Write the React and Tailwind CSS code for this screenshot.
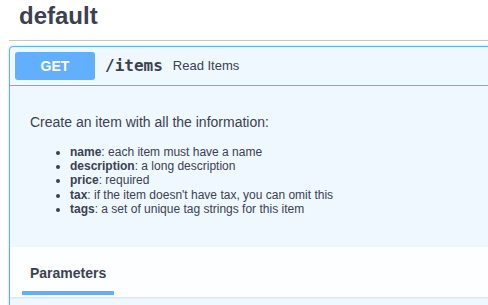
import React from 'react';

const fields = [
  { name: 'name', text: 'each item must have a name' },
  { name: 'description', text: 'a long description' },
  { name: 'price', text: 'required' },
  { name: 'tax', text: "if the item doesn't have tax, you can omit this" },
  { name: 'tags', text: 'a set of unique tag strings for this item' },
];

export default function App() {
  return (
    <div className="w-[488px] h-[305px] overflow-hidden bg-white text-[#3b4151] font-['Liberation_Sans',Arial,sans-serif]">
      <div className="w-[540px] pl-[9px]">
        {/* tag heading */}
        <div className="h-[41px] border-b border-[#c4c6cb] pl-[10px] pt-[2px]">
          <h3 className="text-[24px] leading-[28px] font-bold">default</h3>
        </div>

        {/* operation block */}
        <div className="mt-[5px] rounded-[4px] border border-[#61affe] bg-[#eff7ff] shadow-[0_0_3px_rgba(0,0,0,0.19)]">
          <div className="flex items-center p-[5px] border-b border-[#61affe]">
            <span className="w-[80px] h-[28px] flex items-center justify-center rounded-[3px] bg-[#61affe] text-white text-[14px] font-bold">
              GET
            </span>
            <span className="px-[10px] text-[16px] font-bold font-['DejaVu_Sans_Mono',monospace]">/items</span>
            <span className="text-[13px]">Read Items</span>
          </div>

          <div className="h-[161px] px-[20px] pt-[28px]">
            <p className="text-[14px] leading-[16px]">Create an item with all the information:</p>
            <ul className="mt-[15px] pl-[40px] list-disc text-[12px] leading-[14.2px]">
              {fields.map((f) => (
                <li key={f.name}>
                  <strong className="font-bold">{f.name}</strong>: {f.text}
                </li>
              ))}
            </ul>
          </div>

          <div className="h-[50px] pl-[12px] bg-[rgba(255,255,255,0.8)] shadow-[0_1px_2px_rgba(0,0,0,0.1)]">
            <div className="inline-flex flex-col px-2 pt-[18px]">
              <span className="text-[14px] leading-[16px] font-bold">Parameters</span>
              <span className="mt-[10px] -mx-2 h-[4px] bg-[#61affe]" />
            </div>
          </div>

          <div className="h-[40px]" />
        </div>
      </div>
    </div>
  );
}
